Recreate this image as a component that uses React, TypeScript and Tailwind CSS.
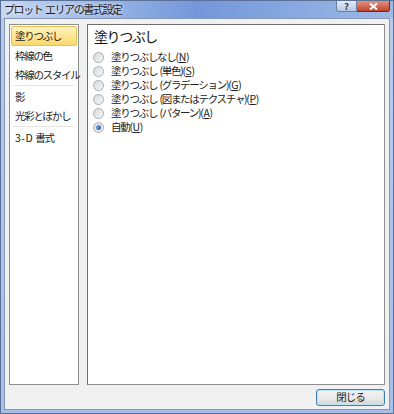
import React from "react";

const font = { fontFamily: '"Noto Sans CJK JP", "Noto Sans", sans-serif' };

function Radio({ checked }: { checked?: boolean }) {
  return (
    <span className="relative inline-flex h-[11px] w-[11px] shrink-0 items-center justify-center rounded-full border border-[#a9aeb4] bg-gradient-to-br from-[#d8dadd] to-[#f6f6f6]">
      {checked && (
        <span className="h-[5px] w-[5px] rounded-full bg-gradient-to-br from-[#7fb3ee] to-[#1d4f9c]" />
      )}
    </span>
  );
}

function Opt({ label, sub, k, checked }: { label: string; sub?: string; k: string; checked?: boolean }) {
  return (
    <div className="flex h-[14px] items-center gap-[7px] pl-[1px]">
      <Radio checked={checked} />
      <span className="whitespace-nowrap text-[10.5px] leading-none tracking-[-1.3px] text-[#222]">
        {label}
        {sub && (
          <>
            <span className="tracking-normal"> </span>({sub})
          </>
        )}
        <span className="tracking-[-0.4px]">
          (<span className="underline">{k}</span>)
        </span>
      </span>
    </div>
  );
}

function NavItem({ children }: { children: React.ReactNode }) {
  return (
    <div className="flex h-[19px] items-center whitespace-nowrap pl-[4px]">{children}</div>
  );
}

export default function App() {
  return (
    <div
      style={font}
      className="flex h-[414px] w-[394px] flex-col overflow-hidden border border-[#5a7096] bg-gradient-to-b from-[#b7cbec] to-[#a6bfe8]"
    >
      {/* title bar */}
      <div className="relative flex h-[17px] shrink-0 items-center bg-gradient-to-r from-[#c6d6f1] via-[#7397da] to-[#9fb9e6] pl-[3px]">
        <span className="whitespace-nowrap text-[11px] leading-none tracking-[-1.4px] text-[#1d1d1d] [text-shadow:0_0_4px_#ffffff]">
          プロット<span className="tracking-normal"> </span>エリアの書式設定
        </span>
        <div className="absolute right-[3px] top-[-1px] flex">
          <div className="flex h-[12px] w-[21px] items-center justify-center rounded-bl-[3px] border border-[#6b7f9f] bg-gradient-to-b from-[#e3ebf7] to-[#b6c8e4] text-[9px] font-bold leading-none text-[#333]">
            ?
          </div>
          <div className="flex h-[12px] w-[33px] items-center justify-center rounded-br-[3px] border border-l-0 border-[#6b2b22] bg-gradient-to-b from-[#e1917f] to-[#c2432b]">
            <svg width="9" height="7" viewBox="0 0 9 7">
              <path d="M1 0.5 L8 6.5 M8 0.5 L1 6.5" stroke="#fff" strokeWidth="2" />
            </svg>
          </div>
        </div>
      </div>
      {/* body */}
      <div className="mx-[3px] mb-[3px] flex flex-1 flex-col border border-[#8597b6] bg-[#f0f0f0] px-[4px] pt-[5px]">
        <div className="flex flex-1 gap-[8px]">
          {/* left nav */}
          <div className="flex w-[70px] flex-col border border-[#8e8f8f] bg-white px-[1px] pt-[1px] text-[10.5px] tracking-[-1.3px] text-[#222]">
            <div className="flex h-[20px] items-center whitespace-nowrap rounded-[2px] border border-[#e3c25a] bg-gradient-to-b from-[#fff3c0] to-[#fbd869] pl-[3px]">
              塗りつぶし
            </div>
            <NavItem>枠線の色</NavItem>
            <NavItem>枠線のスタイル</NavItem>
            <div className="mx-[2px] my-[1px] h-px bg-[#e6e6e6]" />
            <NavItem>影</NavItem>
            <NavItem>光彩とぼかし</NavItem>
            <div className="mx-[2px] my-[1px] h-px bg-[#e6e6e6]" />
            <NavItem>
              <span className="tracking-[0.5px]">3-D </span>
              <span className="ml-[2px]">書式</span>
            </NavItem>
          </div>
          {/* right panel */}
          <div className="flex flex-1 flex-col border border-[#8e8f8f] border-l-[#6f6f6f] border-t-[#6f6f6f] bg-white pl-[4px]">
            <div className="mb-[3px] pl-[2px] text-[14px] leading-[22px] tracking-[-1.5px] text-[#111]">塗りつぶし</div>
            <Opt label="塗りつぶしなし" k="N" />
            <Opt label="塗りつぶし" sub="単色" k="S" />
            <Opt label="塗りつぶし" sub="グラデーション" k="G" />
            <Opt label="塗りつぶし" sub="図またはテクスチャ" k="P" />
            <Opt label="塗りつぶし" sub="パターン" k="A" />
            <Opt label="自動" k="U" checked />
          </div>
        </div>
        <div className="flex h-[24px] items-center justify-end">
          <button className="flex h-[17px] w-[69px] items-center justify-center rounded-[3px] border border-[#3c7fb1] bg-gradient-to-b from-[#f2f2f2] via-[#ebebeb] to-[#d5d5d5] text-[10.5px] leading-none tracking-[-1px] text-[#222] shadow-[inset_0_0_0_1px_#bfe3f7]">
            閉じる
          </button>
        </div>
      </div>
    </div>
  );
}
